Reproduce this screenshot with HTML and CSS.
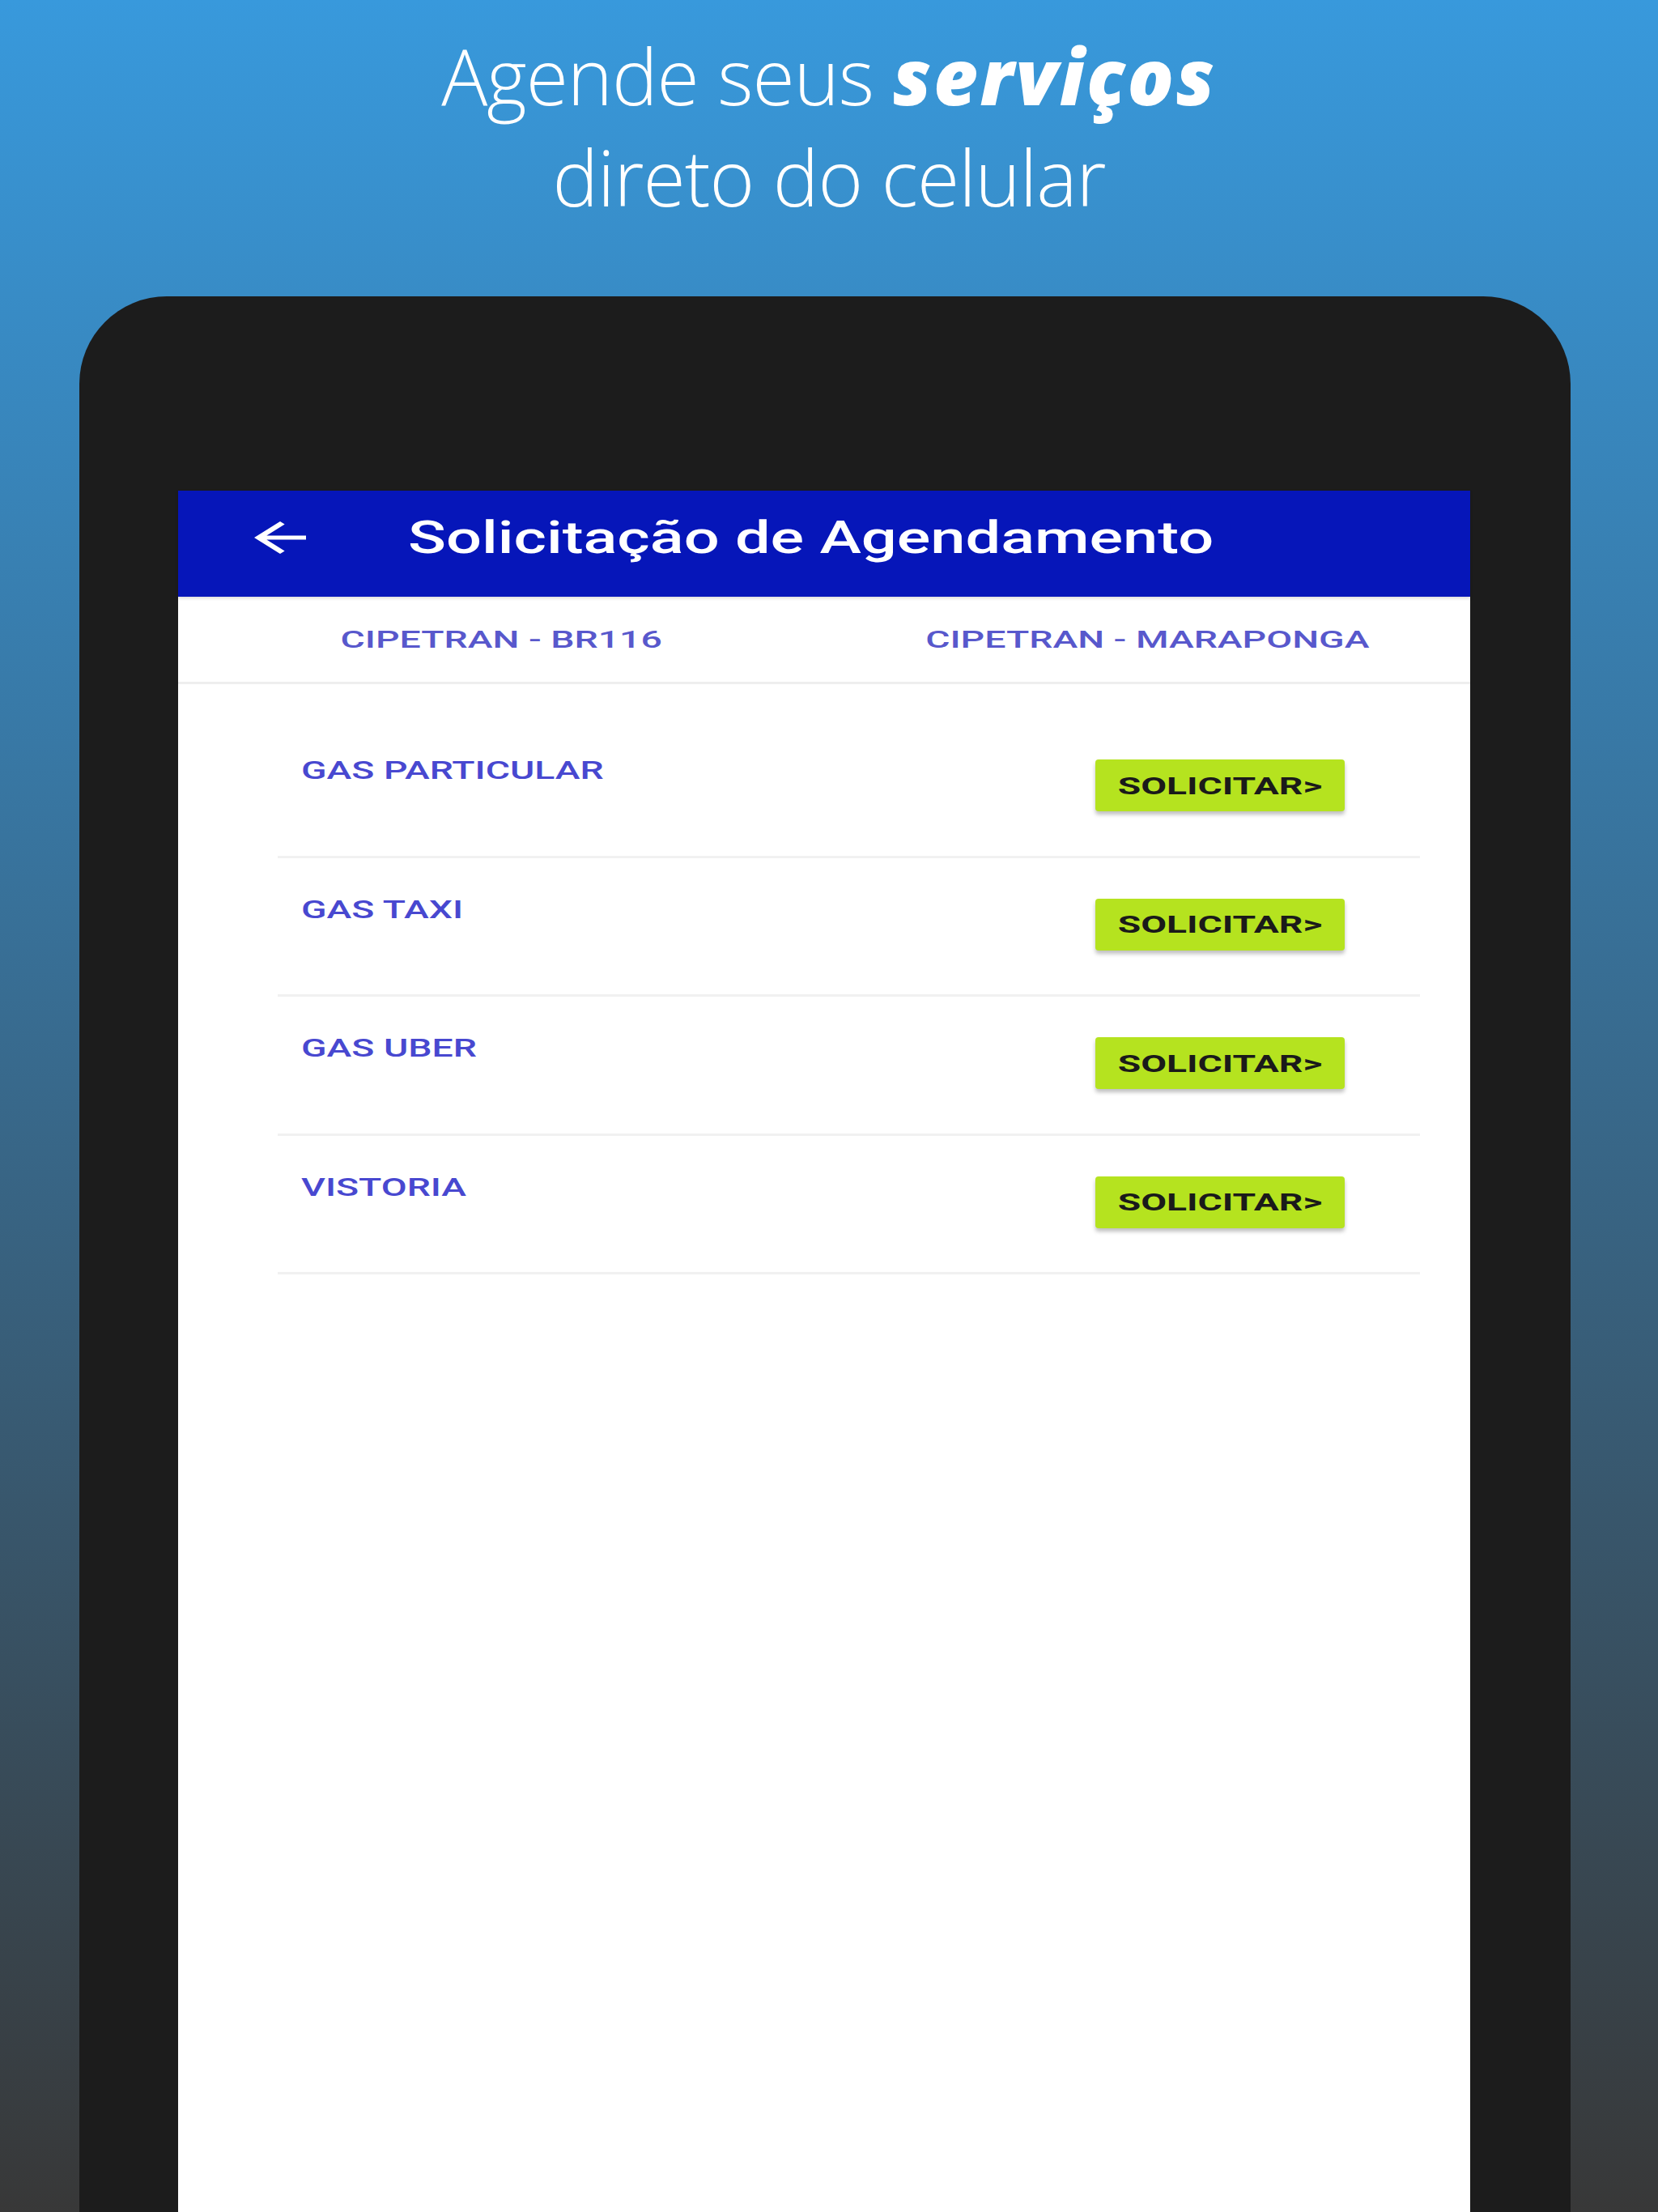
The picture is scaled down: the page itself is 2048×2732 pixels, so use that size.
FILE: index.html
```html
<!DOCTYPE html>
<html lang="pt-BR">
<head>
<meta charset="utf-8">
<title>Solicitação de Agendamento</title>
<link rel="stylesheet" href="styles.css">
</head>
<body>
<div class="page">
  <h1 class="headline">Agende seus <b>serviços</b><br>direto do celular</h1>
  <div class="device">
    <div class="screen">
      <header class="appbar">
        <svg class="back" viewBox="4 4 16 16" preserveAspectRatio="none" aria-hidden="true">
          <path d="M20 11H7.83l5.59-5.59L12 4l-8 8 8 8 1.41-1.41L7.83 13H20v-2z" fill="#ffffff"/>
        </svg>
        <span class="title">Solicitação de Agendamento</span>
      </header>
      <nav class="tabs">
        <div class="tab"><span class="tab-text">CIPETRAN - BR116</span></div>
        <div class="tab"><span class="tab-text">CIPETRAN - MARAPONGA</span></div>
      </nav>
      <ul class="list">
        <li class="row"><span class="label">GAS PARTICULAR</span><button class="btn"><span class="btn-text">SOLICITAR&gt;</span></button></li>
        <li class="row"><span class="label">GAS TAXI</span><button class="btn"><span class="btn-text">SOLICITAR&gt;</span></button></li>
        <li class="row"><span class="label">GAS UBER</span><button class="btn"><span class="btn-text">SOLICITAR&gt;</span></button></li>
        <li class="row"><span class="label">VISTORIA</span><button class="btn"><span class="btn-text">SOLICITAR&gt;</span></button></li>
      </ul>
    </div>
  </div>
</div>
</body>
</html>
```

FILE: styles.css
```css
html, body {
  margin: 0;
  padding: 0;
}

body {
  width: 2048px;
  height: 2732px;
  overflow: hidden;
  font-family: Roboto, "Liberation Sans", sans-serif;
  background: linear-gradient(180deg, #3899dc 0%, #38688a 50%, #383838 100%);
}

.page {
  display: flex;
  flex-direction: column;
  height: 2732px;
}

.headline {
  margin: 0;
  padding-top: 31px;
  text-align: center;
  color: #ffffff;
  font-family: "Open Sans", sans-serif;
  font-weight: 300;
  font-size: 95px;
  line-height: 125px;
  letter-spacing: -1px;
}

.headline b {
  font-weight: 800;
  font-style: italic;
  letter-spacing: 2.5px;
}

.device {
  margin: 85px 0 0 98px;
  width: 1842px;
  flex: 1;
  box-sizing: border-box;
  padding: 240px 124px 0 122px;
  background: #1c1c1c;
  border-radius: 108px 108px 0 0;
  display: flex;
}

.screen {
  flex: 1;
  background: #ffffff;
  display: flex;
  flex-direction: column;
}

.appbar {
  height: 131px;
  box-sizing: border-box;
  padding: 0 0 16px 94px;
  background: #0616b9;
  display: flex;
  align-items: center;
  box-shadow: 0 2px 4px rgba(0, 0, 0, 0.15);
  position: relative;
  z-index: 1;
}

.back {
  width: 64px;
  height: 40px;
  flex: none;
}

.title {
  display: inline-block;
  margin-left: 126px;
  color: #ffffff;
  font-weight: 500;
  font-size: 55px;
  transform: scaleX(1.41);
  transform-origin: left center;
  white-space: nowrap;
}

.tabs {
  height: 108px;
  display: flex;
  border-bottom: 3px solid #eeeeee;
  box-sizing: border-box;
}

.tab {
  flex: 1;
  display: flex;
  align-items: center;
  justify-content: center;
}

.tab-text {
  display: inline-block;
  color: #5858cc;
  font-weight: 500;
  font-size: 29px;
  transform: scaleX(1.6);
  white-space: nowrap;
}

.list {
  list-style: none;
  margin: 0 62px 0 123px;
  padding: 43px 0 0 0;
}

.row {
  height: 171.5px;
  box-sizing: border-box;
  border-bottom: 3px solid #f1f1f1;
  display: flex;
  justify-content: space-between;
  align-items: flex-start;
  padding: 0 93px 0 29px;
}

.label {
  display: inline-block;
  margin-top: 45px;
  color: #4848d0;
  font-weight: 500;
  font-size: 31px;
  transform: scaleX(1.495);
  transform-origin: left center;
  white-space: nowrap;
}

.btn {
  margin-top: 50px;
  width: 308px;
  height: 64px;
  border: none;
  border-radius: 4px;
  background: #b5e31f;
  box-shadow: 0 4px 5px rgba(0, 0, 0, 0.25);
  padding: 0;
  display: flex;
  align-items: center;
  justify-content: center;
  font-family: Roboto, "Liberation Sans", sans-serif;
}

.btn-text {
  display: inline-block;
  color: #1a1a1a;
  font-weight: 700;
  font-size: 30px;
  transform: scaleX(1.54);
  white-space: nowrap;
}
```
